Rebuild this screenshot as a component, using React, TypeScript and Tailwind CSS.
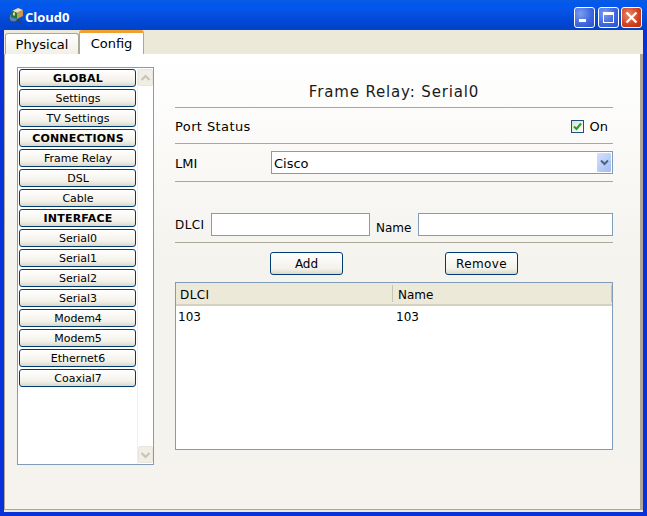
import React from "react";

const items: [string, boolean][] = [
  ["GLOBAL", true], ["Settings", false], ["TV Settings", false], ["CONNECTIONS", true],
  ["Frame Relay", false], ["DSL", false], ["Cable", false], ["INTERFACE", true],
  ["Serial0", false], ["Serial1", false], ["Serial2", false], ["Serial3", false],
  ["Modem4", false], ["Modem5", false], ["Ethernet6", false], ["Coaxial7", false],
];

function SideButton({ label, bold }: { label: string; bold: boolean }) {
  return (
    <div className={`h-[18px] w-[117px] shrink-0 flex items-center justify-center rounded-[3px] border border-[#003c74] bg-[linear-gradient(#ffffff,#f3f1ea_70%,#dcd8c8)] text-[11px] leading-none text-black pl-[1px] ${bold ? "font-bold tracking-[0.2px]" : ""}`}>
      {label}
    </div>
  );
}

function ScrollBtn({ up }: { up: boolean }) {
  return (
    <div className="w-[15px] h-[17px] rounded-[2px] border border-[#e8e6dc] bg-[#f0eee5] flex items-center justify-center">
      <svg width="11" height="8" viewBox="0 0 11 8">
        <path d={up ? "M1.5 6 L5.5 2 L9.5 6" : "M1.5 2 L5.5 6 L9.5 2"} fill="none" stroke="#c5c4b8" strokeWidth="2" />
      </svg>
    </div>
  );
}

function WinBtn({ kind }: { kind: "min" | "max" | "close" }) {
  const bg = kind === "close"
    ? "bg-[radial-gradient(circle_at_35%_35%,#e8866a,#d2401c_60%,#b82a0c)]"
    : "bg-[radial-gradient(circle_at_30%_30%,#7c9cf0,#3c64dc_60%,#2a50c8)]";
  return (
    <div className={`w-[21px] h-[21px] rounded-[3px] border border-white flex items-center justify-center ${bg}`}>
      {kind === "min" && <div className="w-[7px] h-[3px] bg-white mt-[7px] mr-[5px]" />}
      {kind === "max" && <div className="w-[11px] h-[11px] border border-white border-t-[3px]" />}
      {kind === "close" && (
        <svg width="13" height="13" viewBox="0 0 13 13">
          <path d="M1.5 1.5 L11.5 11.5 M11.5 1.5 L1.5 11.5" stroke="#fff" strokeWidth="2.4" />
        </svg>
      )}
    </div>
  );
}

function Rule() {
  return <div className="h-px bg-[#aca899] w-full shrink-0" />;
}

export default function App() {
  return (
    <div className="w-[647px] h-[516px] flex flex-col overflow-hidden bg-[#0831d9] font-['DejaVu_Sans',sans-serif] text-black">
      {/* title bar */}
      <div className="h-[30px] shrink-0 flex items-center pt-[4px] pl-[7px] pr-[5px] bg-[linear-gradient(#0a5be0,#0058ee_12%,#0555ea_30%,#0148d6_70%,#0142c8)]">
        <svg width="17" height="17" viewBox="0 0 17 17" className="shrink-0 -mt-[3px]">
          <path d="M9 12 L14 16" stroke="#30405c" strokeWidth="2" />
          <circle cx="6.5" cy="10.5" r="4.5" fill="#5b7fb8" stroke="#26406e" />
          <path d="M5 4 L11 1 L16 3 L10 6 Z" fill="#f6dfa0" />
          <path d="M4 3 L10 6 L10 12 L4 10 Z" fill="#1d7a3e" />
          <path d="M10 6 L16 3 L16 9 L10 12 Z" fill="#c99a4e" />
          <rect x="6" y="5.5" width="2" height="3" fill="#dce0a8" />
        </svg>
        <div className="ml-[1px] text-[13px] font-bold text-white leading-none font-['Open_Sans',sans-serif]">Cloud0</div>
        <div className="ml-auto flex items-center gap-[2.5px]">
          <WinBtn kind="min" />
          <WinBtn kind="max" />
          <WinBtn kind="close" />
        </div>
      </div>

      {/* client */}
      <div className="flex-1 mx-[4px] mb-[4px] flex flex-col bg-[#ece9d8] min-h-0">
        <div className="h-[24px] shrink-0 flex items-end pl-[1px]">
          <div className="h-[21px] w-[74px] flex items-center justify-center rounded-t-[3px] border border-b-0 border-[#aca899] bg-[linear-gradient(#ffffff,#f1efe6)] text-[13px] leading-none">
            Physical
          </div>
          <div className="h-[24px] w-[65px] flex items-center justify-center border-x border-[#aca899] border-t-[3px] border-t-[#f0a030] rounded-t-[3px] bg-white text-[13px] leading-none">
            Config
          </div>
        </div>

        <div className="flex-1 min-h-0 flex pl-[12px] pt-[13px] mb-[2px] border-r-[3px] border-b border-l border-[#aca899] bg-[linear-gradient(#ffffff,#f5f3ee_45%,#f6f3ee)]">
          {/* side list */}
          <div className="w-[137px] h-[398px] shrink-0 flex border border-[#7f9db9] bg-white pl-[1px] pt-[1px]">
            <div className="flex flex-col gap-[2px] w-[118px]">
              {items.map(([l, b]) => <SideButton key={l} label={l} bold={b} />)}
            </div>
            <div className="flex-1 flex flex-col justify-between items-center border-l border-[#f0f0ea] -mt-px pt-[1px] pb-[1px]">
              <ScrollBtn up />
              <ScrollBtn up={false} />
            </div>
          </div>

          {/* right panel */}
          <div className="ml-[21px] w-[438px] flex flex-col text-[12px] leading-none">
            <div className="h-[40px] flex items-end justify-center pb-[7px] text-[15px] text-[#1a1a1a] tracking-[0.85px]">
              Frame Relay: Serial0
            </div>
            <Rule />
            <div className="h-[35px] flex items-center pt-[2px] text-[13px]">
              <span className="tracking-[0.4px]">Port Status</span>
              <span className="ml-auto flex items-center mr-[5px]">
                <span className="w-[13px] h-[13px] border border-[#1c5180] bg-[linear-gradient(135deg,#dcdcd7,#ffffff)] flex items-center justify-center">
                  <svg width="9" height="9" viewBox="0 0 9 9">
                    <path d="M1 4.5 L3.5 7 L8 1.5" fill="none" stroke="#21a121" strokeWidth="2" />
                  </svg>
                </span>
                <span className="ml-[6px]">On</span>
              </span>
            </div>
            <Rule />
            <div className="h-[37px] flex items-center text-[13px]">
              <span className="w-[96px] pt-[2px]">LMI</span>
              <div className="w-[342px] h-[23px] flex items-center border border-[#7f9db9] bg-white pl-[2px] pr-[1px]">
                <span className="pt-[1px]">Cisco</span>
                <div className="ml-auto w-[14px] h-[19px] rounded-[1px] bg-[linear-gradient(135deg,#d5e1fc,#a2bdf2)] flex items-center justify-center">
                  <svg width="9" height="7" viewBox="0 0 9 7">
                    <path d="M1 1.5 L4.5 5 L8 1.5" fill="none" stroke="#4d6185" strokeWidth="2" />
                  </svg>
                </div>
              </div>
            </div>
            <Rule />
            <div className="h-[60px] flex items-end pb-[6px]">
              <span className="w-[36px] pb-[5px] tracking-[0.4px]">DLCI</span>
              <div className="w-[159px] h-[23px] border border-[#7f9db9] bg-white" />
              <span className="ml-[6px] w-[42px] pb-[2px]">Name</span>
              <div className="w-[195px] h-[23px] border border-[#7f9db9] bg-white" />
            </div>
            <Rule />
            <div className="h-[39px] flex items-start pt-[9px] pl-[95px]">
              <div className="w-[73px] h-[23px] flex items-center justify-center rounded-[3px] border border-[#003c74] bg-[linear-gradient(#ffffff,#f3f1ea_75%,#dcd8c8)]">Add</div>
              <div className="ml-[102px] w-[73px] h-[23px] flex items-center justify-center rounded-[3px] border border-[#003c74] bg-[linear-gradient(#ffffff,#f3f1ea_75%,#dcd8c8)] tracking-[0.4px]">Remove</div>
            </div>
            <div className="h-[168px] w-[438px] flex flex-col border border-[#7f9db9] bg-white">
              <div className="h-[23px] shrink-0 flex items-center bg-[#ece9d8] border-b-[2px] border-[#d6d2c2]">
                <div className="w-[217px] h-[17px] flex items-center pt-[2px] pl-[4px] border-r border-[#c7c5b2] tracking-[0.4px]">DLCI</div>
                <div className="flex-1 h-[17px] flex items-center pt-[2px] pl-[5px] border-r border-[#c7c5b2]">Name</div>
              </div>
              <div className="flex pt-[5px] pl-[2px]">
                <span className="w-[218px]">103</span>
                <span>103</span>
              </div>
            </div>
          </div>
        </div>
      </div>
    </div>
  );
}
